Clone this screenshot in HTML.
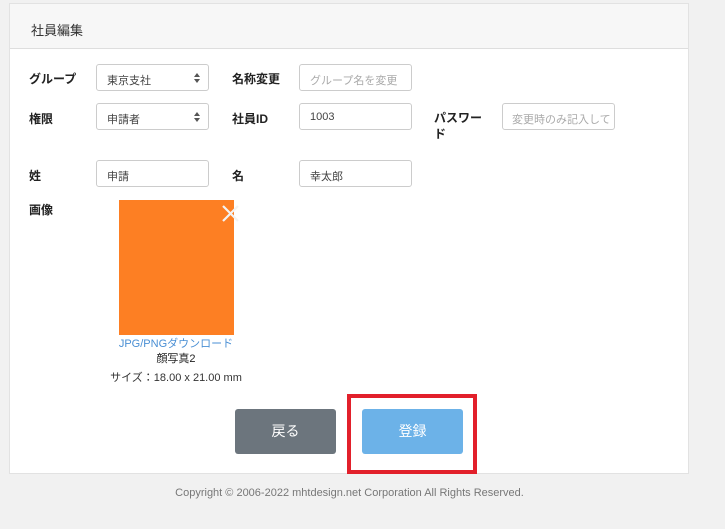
<!DOCTYPE html>
<html><head><meta charset="utf-8"><style>
*{box-sizing:border-box;margin:0;padding:0}
body{width:725px;height:529px;background:#f1f1f1;font-family:"Liberation Sans","Noto Sans CJK JP",sans-serif;position:relative;overflow:hidden;color:#222}
.card{position:absolute;left:9px;top:3px;width:680px;height:471px;background:#fff;border:1px solid #e2e2e2}
.hd{position:absolute;left:0;top:0;width:100%;height:45px;background:#f7f7f7;border-bottom:1px solid #dedede;font-size:13px;padding:16px 0 0 21px;color:#333}
.a{position:absolute;font-size:12px}
.lb{font-weight:bold;color:#222}
.in{position:absolute;width:113px;height:27px;border:1px solid #ccc;border-radius:3px;font-size:11px;padding:7px 0 0 10px;color:#444;background:#fff}
.ph{color:#aaa}
.sel::after{content:"";position:absolute;right:8px;top:8px;border:3px solid transparent;border-bottom:4px solid #555;border-top:0}
.sel::before{content:"";position:absolute;right:8px;top:14px;border:3px solid transparent;border-top:4px solid #555;border-bottom:0}
.btn{position:absolute;width:101px;height:45px;border-radius:3px;color:#fff;font-size:14px;text-align:center;line-height:45px}
</style></head><body>
<div class="card"><div class="hd">社員編集</div></div>
<div class="a lb" style="left:29px;top:70px">グループ</div>
<div class="in sel" style="left:96px;top:64px">東京支社</div>
<div class="a lb" style="left:232px;top:70px">名称変更</div>
<div class="in ph" style="left:299px;top:64px">グループ名を変更</div>
<div class="a lb" style="left:29px;top:110px">権限</div>
<div class="in sel" style="left:96px;top:103px">申請者</div>
<div class="a lb" style="left:232px;top:110px">社員ID</div>
<div class="in" style="left:299px;top:103px">1003</div>
<div class="a lb" style="left:434px;top:110px;line-height:16px">パスワー<br>ド</div>
<div class="in ph" style="left:502px;top:103px;width:113px;overflow:hidden;white-space:nowrap;padding-left:9px">変更時のみ記入して</div>
<div class="a lb" style="left:29px;top:167px">姓</div>
<div class="in" style="left:96px;top:160px">申請</div>
<div class="a lb" style="left:232px;top:167px">名</div>
<div class="in" style="left:299px;top:160px">幸太郎</div>
<div class="a lb" style="left:29px;top:201px">画像</div>
<div style="position:absolute;left:119px;top:200px;width:115px;height:135px;background:#fd7f23"></div>
<svg style="position:absolute;left:221px;top:204px" width="19" height="19"><path d="M2 2L17 17M17 2L2 17" stroke="#f3f3f3" stroke-width="2.2"/></svg>
<div class="a" style="left:100px;width:152px;text-align:center;top:335px;font-size:11px;color:#4a8fd4">JPG/PNGダウンロード</div>
<div class="a" style="left:100px;width:152px;text-align:center;top:350px;font-size:11px">顔写真2</div>
<div class="a" style="left:100px;width:152px;text-align:center;top:369px;font-size:11px;color:#333">サイズ：18.00 x 21.00 mm</div>
<div class="btn" style="left:235px;top:409px;background:#6c757d">戻る</div>
<div class="btn" style="left:362px;top:409px;background:#6cb2e8">登録</div>
<div style="position:absolute;left:347px;top:394px;width:130px;height:80px;border:4px solid #e2202b"></div>
<div class="a" style="left:0;width:699px;text-align:center;top:487px;font-size:11px;color:#777">Copyright © 2006-2022 mhtdesign.net Corporation All Rights Reserved.</div>
</body></html>
